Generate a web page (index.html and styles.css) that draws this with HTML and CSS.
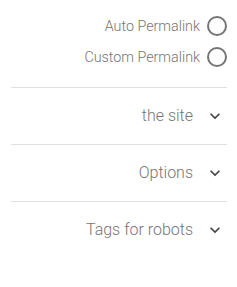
FILE: index.html
```html
<!DOCTYPE html>
<html lang="en">
<head>
    <meta charset="UTF-8">
    <meta name="viewport" content="width=device-width, initial-scale=1.0">
    <title>Permalink Settings</title>
    <link rel="stylesheet" href="styles.css">
</head>
<body>

    <div class="panel">
        <div class="radio-group">
            <label class="radio-row">
                <span class="radio-label">Auto Permalink</span>
                <span class="radio-circle"></span>
            </label>
            <label class="radio-row">
                <span class="radio-label">Custom Permalink</span>
                <span class="radio-circle"></span>
            </label>
        </div>

        <div class="section">
            <span class="section-title">the site</span>
            <svg class="chevron" viewBox="0 0 24 24"><path d="M16.59 8.59L12 13.17 7.41 8.59 6 10l6 6 6-6z"/></svg>
        </div>

        <div class="section">
            <span class="section-title">Options</span>
            <svg class="chevron" viewBox="0 0 24 24"><path d="M16.59 8.59L12 13.17 7.41 8.59 6 10l6 6 6-6z"/></svg>
        </div>

        <div class="section">
            <span class="section-title">Tags for robots</span>
            <svg class="chevron" viewBox="0 0 24 24"><path d="M16.59 8.59L12 13.17 7.41 8.59 6 10l6 6 6-6z"/></svg>
        </div>
    </div>

</body>
</html>
```

FILE: styles.css
```css
body {
    font-family: Roboto, "Liberation Sans", sans-serif;
    margin: 0;
    background-color: #ffffff;
}
.panel {
    padding: 10px 10px 0 11px;
}
.radio-group {
    display: flex;
    flex-direction: column;
    align-items: flex-end;
    padding-bottom: 15px;
    border-bottom: 1px solid #e0e0e0;
}
.radio-row {
    display: flex;
    align-items: center;
    gap: 7px;
    height: 31px;
    cursor: pointer;
}
.radio-label {
    font-size: 14.3px;
    font-weight: 300;
    color: #757575;
}
.radio-circle {
    width: 16px;
    height: 16px;
    border: 2px solid #757575;
    border-radius: 50%;
}
.section {
    display: flex;
    justify-content: flex-end;
    align-items: center;
    gap: 12px;
    height: 56px;
    padding-right: 2px;
    border-bottom: 1px solid #e0e0e0;
}
.section:last-child {
    border-bottom: none;
}
.section-title {
    font-size: 16px;
    font-weight: 300;
    color: #757575;
    margin-bottom: 1px;
}
.chevron {
    width: 20px;
    height: 20px;
    fill: #424242;
}
```
